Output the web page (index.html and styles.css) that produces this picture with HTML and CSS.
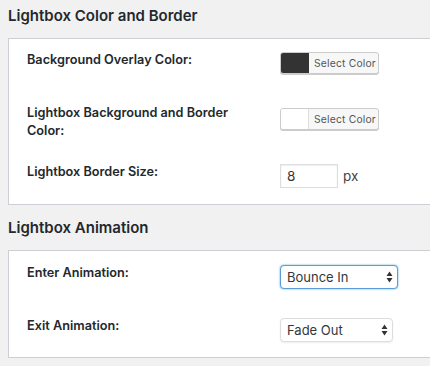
FILE: index.html
```html
<!DOCTYPE html>
<html lang="en">
<head>
  <meta charset="UTF-8" />
  <meta name="viewport" content="width=device-width, initial-scale=1.0" />
  <title>Lightbox Settings</title>
  <link rel="stylesheet" href="styles.css">
</head>
<body>
  <div class="page">
    <h2 class="section-title">Lightbox Color and Border</h2>
    <div class="box">
      <div class="row">
        <label class="row-label">Background Overlay Color:</label>
        <div class="row-field">
          <button class="color-btn"><span class="swatch swatch-dark"></span><span class="color-text">Select Color</span></button>
        </div>
      </div>
      <div class="row">
        <label class="row-label label-wrap">Lightbox Background and Border Color:</label>
        <div class="row-field">
          <button class="color-btn"><span class="swatch"></span><span class="color-text">Select Color</span></button>
        </div>
      </div>
      <div class="row">
        <label class="row-label">Lightbox Border Size:</label>
        <div class="row-field">
          <input class="num-input" type="text" value="8" />
          <span class="unit">px</span>
        </div>
      </div>
    </div>

    <h2 class="section-title">Lightbox Animation</h2>
    <div class="box box-compact">
      <div class="row">
        <label class="row-label">Enter Animation:</label>
        <div class="row-field">
          <div class="select-wrap select-focus">
            <select class="select">
              <option>Bounce In</option>
              <option>Fade In</option>
            </select>
            <svg class="select-arrows" width="7" height="12" viewBox="0 0 7 12"><path d="M3.5 0.5 L6.5 5 L0.5 5 Z M0.5 7 L6.5 7 L3.5 11.5 Z" fill="#333"/></svg>
          </div>
        </div>
      </div>
      <div class="row">
        <label class="row-label">Exit Animation:</label>
        <div class="row-field">
          <div class="select-wrap">
            <select class="select select-narrow">
              <option>Fade Out</option>
              <option>Bounce Out</option>
            </select>
            <svg class="select-arrows" width="7" height="12" viewBox="0 0 7 12"><path d="M3.5 0.5 L6.5 5 L0.5 5 Z M0.5 7 L6.5 7 L3.5 11.5 Z" fill="#333"/></svg>
          </div>
        </div>
      </div>
    </div>
  </div>
</body>
</html>
```

FILE: styles.css
```css
* {
  box-sizing: border-box;
}

body {
  margin: 0;
  padding: 0;
  font-family: Inter, "Liberation Sans", sans-serif;
  background: #f1f1f1;
  color: #23282d;
  overflow: hidden;
}

.page {
  padding-left: 8px;
}

.section-title {
  margin: 12px 0 11px;
  font-size: 15px;
  line-height: 22px;
  font-weight: 600;
  color: #23282d;
}

.section-title:first-child {
  margin-top: 5px;
}

.box {
  background: #fff;
  border: 1px solid #ccd0d4;
  margin-right: -20px;
}

.row {
  display: flex;
  align-items: flex-start;
  height: 56px;
  padding: 13px 0 0 18px;
}

.row:last-child {
  height: 53px;
}

.box-compact .row {
  height: 53px;
  padding-top: 14px;
}

.row-label {
  width: 253px;
  padding-right: 45px;
  margin-top: -1px;
  font-size: 12.7px;
  line-height: 18px;
  font-weight: 600;
}

.label-wrap {
  margin-top: -4px;
}

.row-field {
  display: flex;
  align-items: center;
}

/* color picker button */
.color-btn {
  display: flex;
  align-items: stretch;
  width: 99px;
  height: 22px;
  padding: 0;
  margin: 0;
  border: 1px solid #ccc;
  border-radius: 3px;
  background: #f7f7f7;
  box-shadow: 0 1px 0 #ccc;
  overflow: hidden;
  font-family: inherit;
  text-align: left;
}

.swatch {
  flex: none;
  width: 28px;
  background: #fff;
  border-right: 1px solid #ddd;
}

.swatch-dark {
  background: #333;
  border-right-color: #333;
}

.color-text {
  padding-left: 5px;
  font-size: 10.3px;
  letter-spacing: 0.2px;
  line-height: 20px;
  color: #555;
  white-space: nowrap;
}

.num-input {
  width: 58px;
  height: 24px;
  padding: 0 6px;
  border: 1px solid #ddd;
  box-shadow: inset 0 1px 2px rgba(0, 0, 0, 0.07);
  font-family: inherit;
  font-size: 13.5px;
  color: #32373c;
  outline: none;
}

.unit {
  margin-left: 5px;
  font-size: 13.5px;
  color: #444;
}

/* selects */
.select-wrap {
  position: relative;
}

.select {
  appearance: none;
  -webkit-appearance: none;
  width: 118px;
  height: 24px;
  padding: 0 6px;
  border: 1px solid #ddd;
  border-radius: 4px;
  background: #fff;
  box-shadow: 0 1px 2px rgba(0, 0, 0, 0.07);
  font-family: inherit;
  font-size: 13px;
  color: #32373c;
  outline: none;
}

.select-narrow {
  width: 113px;
}

.select-focus .select {
  border-color: #5b9dd9;
  box-shadow: 0 0 2px rgba(30, 140, 190, 0.8);
}

.select-arrows {
  position: absolute;
  right: 5px;
  top: 6px;
  pointer-events: none;
}
```
